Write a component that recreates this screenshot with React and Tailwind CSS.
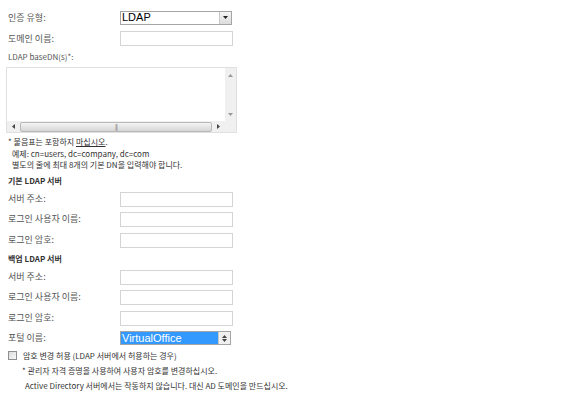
import React from "react";

const font = { fontFamily: '"Noto Sans CJK KR", "Noto Sans", sans-serif' };

function Input() {
  return <div className="w-[113px] h-[15px] border border-[#d4d4d4] bg-white" />;
}

function Row({ label, children, className = "" }) {
  return (
    <div className={"flex items-center h-[15px] " + className}>
      <div className="w-[112px] text-[9px] text-[#555]">{label}</div>
      {children}
    </div>
  );
}

export default function App() {
  return (
    <div className="w-[576px] h-[410px] bg-white text-[#333] pl-[8px] pt-[10px]" style={font}>
      <div className="flex flex-col gap-[6px]">
        <Row label="인증 유형:">
          <div className="w-[112px] h-[14px] border border-[#a5a5a5] bg-white flex items-center">
            <span className="flex-1 pl-[1px] text-[11px] leading-none text-black" style={{ fontFamily: '"Liberation Sans", Arial, sans-serif' }}>LDAP</span>
            <div className="w-[12px] h-[12px] border-l border-[#c8c8c8] bg-gradient-to-b from-[#f6f6f6] to-[#dcdcdc] flex items-center justify-center">
              <svg width="5" height="3" viewBox="0 0 5 3"><path d="M0 0h5L2.5 3z" fill="#222" /></svg>
            </div>
          </div>
        </Row>
        <Row label="도메인 이름:">
          <Input />
        </Row>
      </div>
      <div className="mt-[5px] text-[8px] text-[#555] h-[12px] leading-[12px]">LDAP baseDN(s)*:</div>
      <div className="ml-[-2px] mt-[4px] w-[231px] h-[66px] border border-[#e0e0e0] bg-white flex">
        <div className="flex-1 flex flex-col">
          <div className="flex-1" />
          <div className="h-[11px] bg-[#f0f0f0] flex items-center">
            <div className="w-[13px] flex items-center justify-center">
              <svg width="3" height="5" viewBox="0 0 3 5"><path d="M3 0v5L0 2.5z" fill="#444" /></svg>
            </div>
            <div className="flex-1 h-[10px] border border-[#b8b8b8] rounded-[2px] bg-gradient-to-b from-[#f4f4f4] to-[#d6d6d6] flex items-center justify-center">
              <span className="text-[6px] leading-none text-[#777] tracking-[-1px]">|||</span>
            </div>
            <div className="w-[13px] flex items-center justify-center">
              <svg width="3" height="5" viewBox="0 0 3 5"><path d="M0 0v5L3 2.5z" fill="#444" /></svg>
            </div>
          </div>
        </div>
        <div className="w-[11px] bg-[#f0f0f0] flex flex-col items-center">
          <div className="h-[13px] flex items-center justify-center mt-[1px]">
            <svg width="5" height="3" viewBox="0 0 5 3"><path d="M0 3h5L2.5 0z" fill="#999" /></svg>
          </div>
          <div className="flex-1" />
          <div className="h-[13px] flex items-center justify-center mb-[11px]">
            <svg width="5" height="3" viewBox="0 0 5 3"><path d="M0 0h5L2.5 3z" fill="#999" /></svg>
          </div>
        </div>
      </div>
      <div className="mt-[3px] text-[8px] leading-[11.5px] text-[#333]">
        <div>* 불음표는 포함하지 <span className="underline">마십시오</span>.</div>
        <div className="pl-[4px]">예제: cn=users, dc=company, dc=com</div>
        <div className="pl-[4px]">별도의 줄에 최대 8개의 기본 DN을 입력해야 합니다.</div>
      </div>
      <div className="mt-[4px] text-[8px] font-bold h-[12px] leading-[12px]">기본 LDAP 서버</div>
      <div className="flex flex-col">
        <Row label="서버 주소:" className="mt-[5px]"><Input /></Row>
        <Row label="로그인 사용자 이름:" className="mt-[5px]"><Input /></Row>
        <Row label="로그인 암호:" className="mt-[6px]"><Input /></Row>
      </div>
      <div className="mt-[5px] text-[8px] font-bold h-[12px] leading-[12px]">백업 LDAP 서버</div>
      <div className="flex flex-col">
        <Row label="서버 주소:" className="mt-[5px]"><Input /></Row>
        <Row label="로그인 사용자 이름:" className="mt-[5px]"><Input /></Row>
        <Row label="로그인 암호:" className="mt-[6px]"><Input /></Row>
        <Row label="포털 이름:" className="mt-[5px]">
          <div className="w-[111px] h-[14px] border border-[#a5a5a5] bg-white flex items-center">
            <span className="flex-1 h-full bg-[#3399ff] text-white text-[11px] leading-[12px] pl-[1px]" style={{ fontFamily: '"Liberation Sans", Arial, sans-serif' }}>VirtualOffice</span>
            <div className="w-[12px] h-full bg-[#f0f0f0] border-l border-[#c8c8c8] flex flex-col items-center justify-center gap-[1px]">
              <svg width="5" height="3" viewBox="0 0 5 3"><path d="M0 3h5L2.5 0z" fill="#444" /></svg>
              <svg width="5" height="3" viewBox="0 0 5 3"><path d="M0 0h5L2.5 3z" fill="#444" /></svg>
            </div>
          </div>
        </Row>
      </div>
      <div className="mt-[5px] flex items-center h-[10px]">
        <div className="w-[9px] h-[9px] border border-[#8f8f8f] bg-gradient-to-br from-[#dcdcdc] to-[#f8f8f8]" />
        <span className="ml-[6px] text-[8px] text-[#333]">암호 변경 허용 (LDAP 서버에서 허용하는 경우)</span>
      </div>
      <div className="pl-[14px] mt-[2px] text-[8px] text-[#333] leading-[15px]">
        <div>* 관리자 자격 증명을 사용하여 사용자 암호를 변경하십시오.</div>
        <div className="pl-[3px]">Active Directory 서버에서는 작동하지 않습니다. 대신 AD 도메인을 만드십시오.</div>
      </div>
    </div>
  );
}
